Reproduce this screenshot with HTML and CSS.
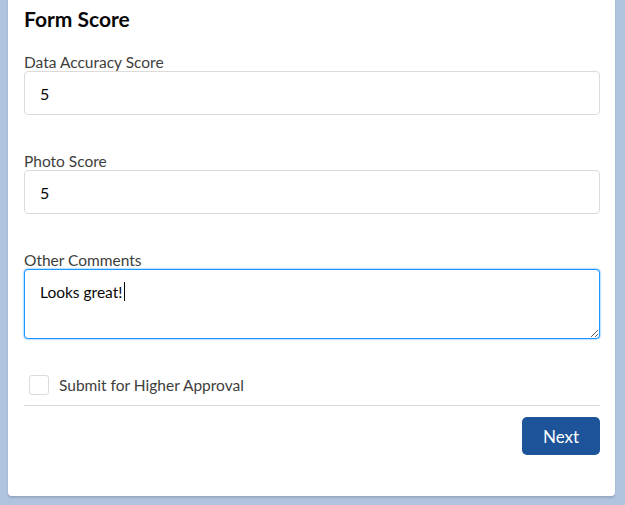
FILE: index.html
```html
<!DOCTYPE html>
<html>
<head>
    <meta charset="utf-8">
    <title>Form Score</title>
    <link rel="stylesheet" href="styles.css">
</head>
<body>
    <div class="card">
        <h2 class="title">Form Score</h2>

        <div class="field">
            <label for="accuracy">Data Accuracy Score</label>
            <input id="accuracy" type="text" value="5">
        </div>

        <div class="field">
            <label for="photo">Photo Score</label>
            <input id="photo" type="text" value="5">
        </div>

        <div class="field">
            <label for="comments">Other Comments</label>
            <div class="textareaWrap">
                <textarea id="comments" class="focused">Looks great!</textarea>
                <span class="caret"></span>
            </div>
        </div>

        <div class="checkRow">
            <input id="higher" type="checkbox">
            <label for="higher">Submit for Higher Approval</label>
        </div>

        <div class="footer">
            <button>Next</button>
        </div>
    </div>
</body>
</html>
```

FILE: styles.css
```css
body {
    border: 0;
    margin: 0;
    background-color: #b0c4df;
    font-family: Lato, "Open Sans", sans-serif;
    color: #080707;
    height: 505px;
    overflow: hidden;
}

.card {
    margin: -6px 0 0 8px;
    width: 607px;
    box-sizing: border-box;
    padding: 12px 15px 41px 16px;
    background-color: #fff;
    border-radius: 4px;
    box-shadow: 0 2px 2px rgba(0, 0, 0, 0.14);
}

.title {
    margin: 0 0 0 0;
    font-size: 21px;
    line-height: 25px;
    font-weight: 700;
}

.field {
    margin-top: 22px;
}

.field + .field {
    margin-top: 37px;
}

.field label {
    display: block;
    font-size: 15.5px;
    line-height: 18px;
    color: #3e3e3c;
}

.field input,
.field textarea {
    display: block;
    width: 100%;
    box-sizing: border-box;
    height: 44px;
    margin: 0;
    padding: 0 15px;
    font-family: inherit;
    font-size: 16px;
    color: #080707;
    background: #fff;
    border: 1px solid #dddbda;
    border-radius: 4px;
    outline: none;
}

.textareaWrap {
    position: relative;
}

.field textarea {
    height: 70px;
    padding: 12px 15px;
    font-size: 15.5px;
    line-height: 20px;
    resize: both;
}

.field textarea.focused {
    border-color: #1b96ff;
    box-shadow: 0 0 2px #1b96ff;
}

.caret {
    position: absolute;
    left: 100px;
    top: 13px;
    width: 1px;
    height: 19px;
    background: #080707;
}

.checkRow {
    display: flex;
    align-items: center;
    gap: 10px;
    margin-top: 36px;
    padding: 0 0 10px 5px;
    border-bottom: 1px solid #dddbda;
}

.checkRow input {
    appearance: none;
    width: 20px;
    height: 20px;
    margin: 0;
    border: 1px solid #dddbda;
    border-radius: 3px;
    background: #fff;
}

.checkRow label {
    font-size: 15.5px;
    line-height: 20px;
    color: #3e3e3c;
}

.footer {
    display: flex;
    justify-content: flex-end;
    padding-top: 11px;
}

button {
    width: 78px;
    height: 38px;
    border: 0;
    border-radius: 5px;
    background-color: #1d5398;
    color: #fff;
    font-family: inherit;
    font-size: 17px;
    cursor: pointer;
}
```
